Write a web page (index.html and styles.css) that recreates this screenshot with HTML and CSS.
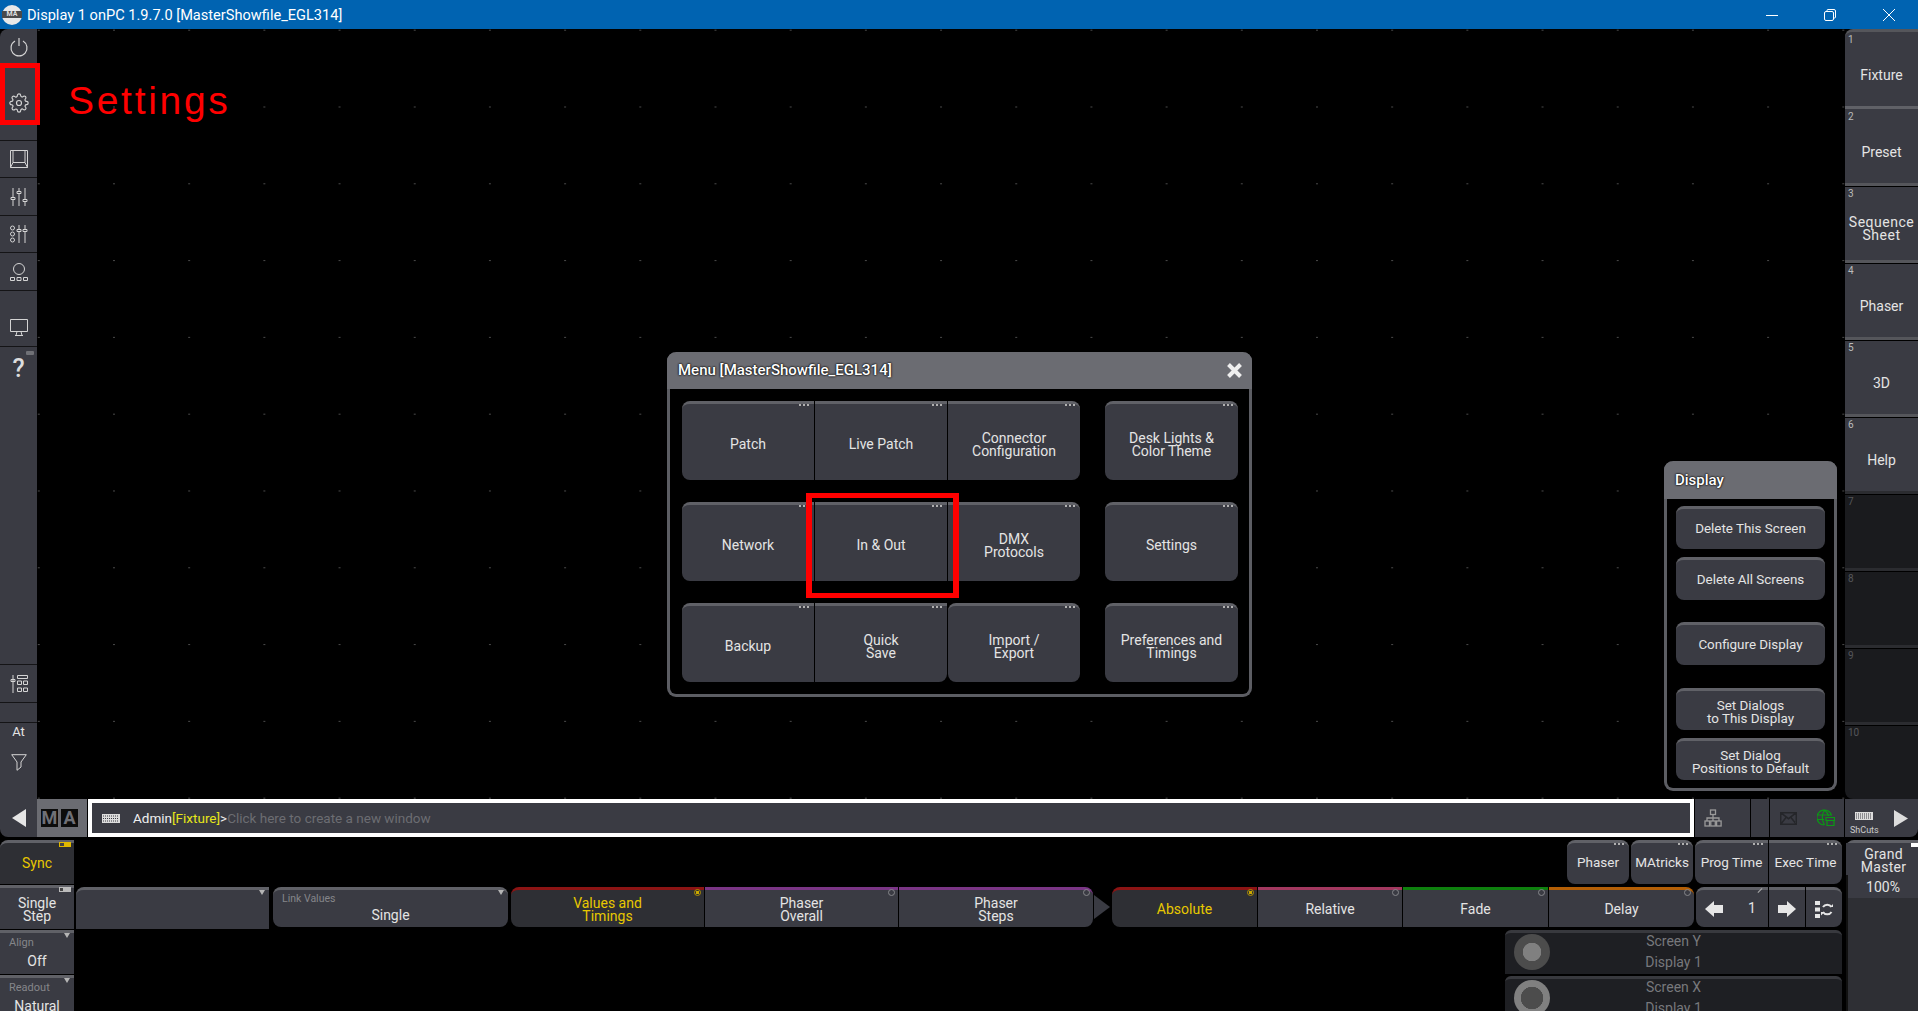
FILE: index.html
```html
<!DOCTYPE html>
<html lang="en">
<head>
<meta charset="utf-8">
<title>Display 1 onPC</title>
<link rel="stylesheet" href="styles.css">
</head>
<body>
<header class="titlebar">
  <div class="logo"><span>MA</span></div>
  <div class="title">Display 1 onPC 1.9.7.0 [MasterShowfile_EGL314]</div>
  <div class="winbtn"><svg width="14" height="14"><path d="M1 7.5h12" stroke="#fff"/></svg></div>
  <div class="winbtn"><svg width="14" height="14" fill="none" stroke="#fff"><rect x="1.5" y="3.5" width="9" height="9" rx="1.5"/><path d="M4 3V2.500q0-1 1-1h6q1.500 0 1.500 1.500v6q0 1-1 1H11"/></svg></div>
  <div class="winbtn"><svg width="14" height="14"><path d="M1 1l12 12M13 1L1 13" stroke="#fff"/></svg></div>
</header>

<div class="upper">
  <nav class="rail">
    <div class="rail-item r-power"><svg class="ico" width="20" height="20" viewBox="0 0 20 20"><path d="M6 4a8 8 0 1 0 8 0M10 1v8"/></svg></div>
    <div class="rail-item r-gear sep"><svg class="ico" width="20" height="20" viewBox="0 0 24 24"><circle cx="12" cy="12" r="3"/><path d="M19.400 15a1.650 1.650 0 0 0 .33 1.820l.06.06a2 2 0 0 1 0 2.830 2 2 0 0 1-2.830 0l-.06-.06a1.650 1.650 0 0 0-1.820-.33 1.650 1.650 0 0 0-1 1.510V21a2 2 0 0 1-2 2 2 2 0 0 1-2-2v-.09A1.650 1.650 0 0 0 9 19.400a1.650 1.650 0 0 0-1.820.33l-.06.06a2 2 0 0 1-2.830 0 2 2 0 0 1 0-2.830l.06-.06a1.650 1.650 0 0 0 .33-1.820 1.650 1.650 0 0 0-1.510-1H3a2 2 0 0 1-2-2 2 2 0 0 1 2-2h.09A1.650 1.650 0 0 0 4.600 9a1.650 1.650 0 0 0-.33-1.820l-.06-.06a2 2 0 0 1 0-2.830 2 2 0 0 1 2.830 0l.06.06a1.650 1.650 0 0 0 1.820.33H9a1.650 1.650 0 0 0 1-1.510V3a2 2 0 0 1 2-2 2 2 0 0 1 2 2v.09a1.650 1.650 0 0 0 1 1.510 1.650 1.650 0 0 0 1.820-.33l.06-.06a2 2 0 0 1 2.830 0 2 2 0 0 1 0 2.830l-.06.06a1.650 1.650 0 0 0-.33 1.820V9a1.650 1.650 0 0 0 1.510 1H21a2 2 0 0 1 2 2 2 2 0 0 1-2 2h-.09a1.650 1.650 0 0 0-1.510 1z"/></svg></div>
    <div class="rail-item r-std sep"><svg class="ico" width="18" height="18" viewBox="0 0 18 18"><path d="M.5.500h17v17H.5zM3 .5v12L.5 17.500M15 .5v12l2.500 5M3 12.500h12"/></svg></div>
    <div class="rail-item r-h38 sep"><svg class="ico" width="18" height="18" viewBox="0 0 18 18"><path d="M3 0v9M3 12v6M9 0v3M9 6v12M15 0v11M15 14v4M1 9.500h4v2H1zM7 3.500h4v2H7zM13 11.500h4v2h-4z"/></svg></div>
    <div class="rail-item r-std sep"><svg class="ico" width="18" height="18" viewBox="0 0 18 18"><circle cx="2.500" cy="3" r="2"/><circle cx="2.500" cy="9" r="2"/><circle cx="2.500" cy="15" r="2"/><path d="M9 0v4M9 6v12M15 0v4M15 6v12M7 4.500h4v2H7zM13 4.500h4v2h-4z"/></svg></div>
    <div class="rail-item r-h38 sep"><svg class="ico" width="18" height="18" viewBox="0 0 18 18"><circle cx="9" cy="6" r="5.500"/><path d="M.5 14.500h4v3h-4zM7 14.500h4v3H7zM13.500 14.500h4v3h-4z"/></svg></div>
    <div class="rail-item r-monitor sep"><svg class="ico" width="18" height="18" viewBox="0 0 18 18"><path d="M.5 1.500h17v12H.5zM6 17.500l1-4M12 17.500l-1-4M5 17.500h8"/></svg></div>
    <div class="rail-item r-help"><span>?</span><i class="help-led"></i></div>
    <div class="rail-item r-fill sep"></div>
    <div class="rail-item r-h38 sep"><svg class="ico" width="18" height="18" viewBox="0 0 18 18"><path d="M3 0v18M1 4.500h4v2H1zM7.500.500h10v3h-10zM7.500 6h4v3.500h-4zM13.500 6h4v3.500h-4zM7.500 13h4v3.500h-4zM13.500 13h4v3.500h-4z"/></svg></div>
    <div class="rail-item r-blank sep"></div>
    <div class="rail-item r-at">At</div>
    <div class="rail-item r-filter"><svg class="ico" width="16" height="17" viewBox="0 0 16 17"><path d="M.7.700h14.600L10 8v5l-4 3.300V8z"/></svg></div>
    <div class="rail-item r-arrow"><svg width="14" height="18"><path d="M14 0v18L0 9z" fill="#e6e6e6"/></svg></div>
  </nav>

  <div class="center">
    <div class="stage">
      <main class="canvas">
        <div class="note-text">Settings</div>
        <div class="note-box note-gear"></div>

        <section class="dialog menu-dialog">
          <div class="dialog-head">
            <span>Menu [MasterShowfile_EGL314]</span>
            <svg class="close" width="17" height="17" viewBox="0 0 17 17"><path d="M2.500 2.500l12 12M14.500 2.500l-12 12" stroke="#eee" stroke-width="4"/></svg>
          </div>
          <div class="menu-grid">
            <div class="btn dots round-l">Patch</div>
            <div class="btn dots">Live Patch</div>
            <div class="btn dots round-r">Connector<br>Configuration</div>
            <div class="btn dots round off">Desk Lights &amp;<br>Color Theme</div>
            <div class="btn dots round-l">Network</div>
            <div class="btn dots">In &amp; Out</div>
            <div class="btn dots round-r">DMX<br>Protocols</div>
            <div class="btn dots round off">Settings</div>
            <div class="btn dots round-l">Backup</div>
            <div class="btn dots round-br">Quick<br>Save</div>
            <div class="btn dots round">Import /<br>Export</div>
            <div class="btn dots round off">Preferences and<br>Timings</div>
          </div>
        </section>
        <div class="note-box note-inout"></div>

        <section class="dialog display-dialog">
          <div class="dialog-head"><span>Display</span></div>
          <div class="display-list">
            <div class="btn round dl-a">Delete This Screen</div>
            <div class="btn round dl-b">Delete All Screens</div>
            <div class="btn round dl-c">Configure Display</div>
            <div class="btn round dl-d">Set Dialogs<br>to This Display</div>
            <div class="btn round dl-e">Set Dialog<br>Positions to Default</div>
          </div>
        </section>
      </main>

      <aside class="views">
        <div class="view first"><small>1</small>Fixture</div>
        <div class="view bright"><small>2</small>Preset</div>
        <div class="view"><small>3</small><span class="wide">Sequence<br>Sheet</span></div>
        <div class="view"><small>4</small>Phaser</div>
        <div class="view"><small>5</small>3D</div>
        <div class="view"><small>6</small>Help</div>
        <div class="view empty"><small>7</small></div>
        <div class="view empty"><small>8</small></div>
        <div class="view empty"><small>9</small></div>
        <div class="view empty last"><small>10</small></div>
      </aside>
    </div>

    <div class="cmdrow">
      <div class="ma-logo"><b>M</b><b>A</b></div>
      <div class="cmdline">
        <svg class="kbd" width="18" height="9" viewBox="0 0 18 9"><rect width="18" height="9" fill="#ddd"/><path d="M1 2h16M1 4.500h16M1 7h16" stroke="#3a3b43" stroke-dasharray="1 1"/></svg>
        <span class="cmd-user">Admin</span><span class="cmd-fix">[Fixture]</span><span class="cmd-user">&gt;</span><span class="cmd-hint">Click here to create a new window</span>
      </div>
      <div class="cell c-net"><svg width="18" height="18" viewBox="0 0 18 18" fill="none" stroke="#9a9a9a" stroke-width="1.300"><rect x="6.500" y="1" width="5" height="4.500"/><rect x="1" y="12" width="4.500" height="5"/><rect x="6.800" y="12" width="4.500" height="5"/><rect x="12.600" y="12" width="4.500" height="5"/><path d="M9 5.500V12M3 12V9h12v3"/></svg></div>
      <div class="cell c-blank"></div>
      <div class="cell c-status">
        <svg width="17" height="13" viewBox="0 0 17 13" fill="none" stroke="#25262a" stroke-width="1.500"><path d="M.7.700h15.600v11.600H.7zM.7.700l7.800 6 7.800-6M.7 12.300l5.500-7M16.300 12.300l-5.500-7"/></svg>
        <svg width="18" height="18" viewBox="0 0 18 18" fill="none" stroke="#0a9a14" stroke-width="1.200"><path d="M14.500 6A7.500 7.500 0 1 0 7 16M1 6h14M.5 10.500H7M7.500 1Q3 8 7.500 16M7.500 1Q11 4 11.500 7"/><path d="M9 8.500h8.500v3H9zM10 11.500h7v5h-7z"/></svg>
      </div>
      <div class="cell c-short">
        <div class="short"><svg width="18" height="8" viewBox="0 0 18 8"><rect width="18" height="8" fill="#ddd"/><path d="M1 2h16M1 4h16M1 6h16" stroke="#3a3b43" stroke-dasharray="1 1"/></svg><span>ShCuts</span></div>
        <svg width="14" height="17"><path d="M0 0v17l14-8.500z" fill="#ddd"/></svg>
      </div>
    </div>
  </div>
</div>

<div class="lower">
  <div class="left-col">
    <div class="sbtn on"><i class="led led-on"></i>Sync</div>
    <div class="sbtn two"><i class="led"></i>Single<br>Step</div>
    <div class="sbtn lab"><i class="drop"></i><small>Align</small><span>Off</span></div>
    <div class="sbtn lab"><i class="drop"></i><small>Readout</small><span>Natural</span></div>
  </div>

  <div class="mid-col">
    <div class="row-top">
      <div class="tbtn dots round w62">Phaser</div>
      <div class="tbtn dots round w62">MAtricks</div>
      <div class="tbtn dots round-l w73">Prog Time</div>
      <div class="tbtn dots round-r w73">Exec Time</div>
    </div>
    <div class="row-tabs">
      <div class="tab plain w193"><i class="drop"></i></div>
      <div class="tab link round w235"><i class="drop"></i><small>Link Values</small><span>Single</span></div>
      <div class="tab two c-red on round-l w193"><i class="ring ring-on"></i>Values and<br>Timings</div>
      <div class="tab two c-purple w193"><i class="ring"></i>Phaser<br>Overall</div>
      <div class="tab two c-purple round-r w194"><i class="ring"></i>Phaser<br>Steps</div>
      <svg class="tab-arrow" width="16" height="24"><path d="M0 0l16 12L0 24z" fill="#3a3b43"/></svg>
      <div class="tab c-red on round-l w145"><i class="ring ring-on"></i>Absolute</div>
      <div class="tab c-rose w144"><i class="ring"></i>Relative</div>
      <div class="tab c-green w145"><i class="ring"></i>Fade</div>
      <div class="tab c-orange round-r w145"><i class="ring"></i>Delay</div>
      <div class="stepper">
        <div class="step s-num round-l">
          <svg width="18" height="16"><path d="M0 8l9-8v4h9v8H9v4z" fill="#e6e6e6"/></svg><span>1</span><i class="slash"></i>
        </div>
        <div class="step s-icon"><svg width="18" height="16"><path d="M18 8L9 0v4H0v8h9v4z" fill="#e6e6e6"/></svg></div>
        <div class="step s-icon round-r"><svg width="18" height="18" viewBox="0 0 18 18"><path d="M0 1h5v4H0zM0 7.500h5v4H0zM0 14h5v4H0z" fill="#e6e6e6"/><path d="M16.500 7A5 5 0 0 0 8 7M8 12a5 5 0 0 0 8.500 0" fill="none" stroke="#e6e6e6" stroke-width="2"/><path d="M15 7h3.500V3.500zM9.500 12H6v3.500z" fill="#e6e6e6"/></svg></div>
      </div>
    </div>
    <div class="encoders">
      <div class="enc"><div class="knob knob-y"></div><div class="enc-text">Screen Y<br>Display 1</div></div>
      <div class="enc"><div class="knob knob-x"></div><div class="enc-text">Screen X<br>Display 1</div></div>
    </div>
  </div>

  <div class="gm-col">
    <i class="gm-led"></i>
    <div class="gm-name">Grand<br>Master</div>
    <div class="gm-val">100%</div>
    <div class="gm-rest"></div>
  </div>
</div>
</body>
</html>
```

FILE: styles.css
```css
* {
  box-sizing: border-box;
}
html, body {
  margin: 0;
  height: 1011px;
  overflow: hidden;
  background: #000;
}
body {
  font-family: Roboto, "Liberation Sans", sans-serif;
  font-size: 14px;
  line-height: 13px;
  color: #e4e4e4;
}
i {
  display: block;
}

/* title bar */
.titlebar {
  height: 29px;
  display: flex;
  align-items: center;
  background: #0063b1;
  color: #fff;
}
.logo {
  width: 20px;
  height: 20px;
  margin-left: 2px;
  border-radius: 50%;
  background: #e8e8e8;
  display: flex;
  align-items: center;
  justify-content: center;
}
.logo span {
  width: 100%;
  background: #4a4a4a;
  color: #ddd;
  font-size: 7px;
  line-height: 7px;
  font-weight: 700;
  text-align: center;
}
.title {
  flex: 1;
  margin-left: 5px;
  font-size: 14.600px;
  line-height: 20px;
}
.winbtn {
  width: 58.500px;
  height: 29px;
  display: flex;
  align-items: center;
  justify-content: center;
}

/* left rail */
.upper {
  display: flex;
  height: 808px;
}
.rail {
  width: 37px;
  flex: none;
  display: flex;
  flex-direction: column;
  background: #3a3b43;
  border-radius: 8px 0 0 8px;
}
.rail-item {
  display: flex;
  align-items: center;
  justify-content: center;
  position: relative;
}
.sep {
  border-bottom: 1px solid #141416;
}
.ico {
  fill: none;
  stroke: #d4d4d4;
  stroke-width: 1;
}
.r-power { height: 36px; }
.r-power .ico { stroke-width: 1.200; }
.r-gear { height: 76px; padding-top: 1px; }
.r-gear .ico { stroke-width: 1.400; }
.r-std { height: 37px; }
.r-h38 { height: 38px; }
.r-monitor { height: 56px; padding-top: 17px; }
.r-help { height: 40px; font-size: 25px; font-weight: 500; color: #ddd; padding-top: 2px; }
.help-led {
  position: absolute;
  top: 4px;
  right: 3px;
  width: 8px;
  height: 4px;
  background: #707176;
  border-radius: 1px;
}
.r-fill { flex: 1; }
.r-blank { height: 20px; }
.r-at { height: 17px; font-size: 13px; }
.r-filter { height: 59px; padding-bottom: 15px; }
.r-arrow { height: 38px; }

/* main area */
.center {
  flex: 1;
  min-width: 0;
  display: flex;
  flex-direction: column;
}
.stage {
  height: 770px;
  display: flex;
}
.canvas {
  flex: 1;
  position: relative;
  background-color: #000;
  background-image: radial-gradient(circle, #4a4a4a 0.700px, transparent 1px);
  background-size: 75.200px 76.800px;
  background-position: 39.400px 39.600px;
}
.note-text {
  position: absolute;
  left: 31px;
  top: 49px;
  color: #f00;
  font-family: "Liberation Sans", sans-serif;
  font-size: 39px;
  line-height: 45px;
  letter-spacing: 2.700px;
}
.note-box {
  position: absolute;
  border: 5px solid #f00;
  z-index: 5;
}
.note-gear {
  left: -37px;
  top: 34px;
  width: 40px;
  height: 62px;
}
.note-inout {
  left: 769px;
  top: 464px;
  width: 153px;
  height: 105px;
  border-width: 5px 6px;
}

/* floating dialogs */
.dialog {
  position: absolute;
  background: #000;
  border: 3px solid #5c5d63;
  border-top: 0;
  border-radius: 9px;
}
.dialog-head {
  display: flex;
  align-items: center;
  justify-content: space-between;
  margin: 0 -3px;
  background: #6b6c72;
  border-radius: 9px 9px 0 0;
  color: #fff;
  font-size: 15px;
  font-weight: 500;
  text-shadow: 0 0 2px #000, 0 0 2px #000;
}
.menu-dialog {
  left: 630px;
  top: 323px;
  width: 585px;
  height: 345px;
}
.menu-dialog .dialog-head {
  height: 37px;
  padding: 0 9px 0 11px;
}
.menu-grid {
  display: grid;
  grid-template-columns: 132px 132px 132px 157px;
  grid-template-rows: 79px 79px 79px;
  gap: 22px 1px;
  padding: 12px 0 0 12px;
}
.btn {
  position: relative;
  display: flex;
  align-items: center;
  justify-content: center;
  text-align: center;
  background: #3a3b43;
  border-top: 3px solid #606167;
  padding-top: 5px;
}
.off {
  margin-left: 24px;
}
.round { border-radius: 8px; }
.round-l { border-radius: 8px 0 0 8px; }
.round-r { border-radius: 0 8px 8px 0; }
.round-br { border-radius: 0 0 8px 0; }
.dots::after {
  content: "";
  position: absolute;
  top: 0;
  right: 4px;
  width: 11px;
  height: 2px;
  background: repeating-linear-gradient(90deg, #b0b0b0 0 2px, transparent 2px 4px);
}
.display-dialog {
  left: 1627px;
  top: 432px;
  width: 173px;
  height: 330px;
}
.display-dialog .dialog-head {
  height: 38px;
  padding: 0 11px;
}
.display-list {
  display: flex;
  flex-direction: column;
  padding: 7px 9px 0;
}
.display-list .btn {
  font-size: 13.400px;
  padding: 0 0 1px;
}
.display-list .dl-d, .display-list .dl-e {
  padding: 3px 0 0;
}
.dl-a { height: 43px; }
.dl-b { height: 43px; margin-top: 8px; }
.dl-c { height: 43px; margin-top: 22px; }
.dl-d { height: 42px; margin-top: 23px; }
.dl-e { height: 42px; margin-top: 8px; }

/* right column of views */
.views {
  width: 73px;
  flex: none;
  display: flex;
  flex-direction: column;
}
.view {
  height: 77px;
  position: relative;
  display: flex;
  align-items: center;
  justify-content: center;
  text-align: center;
  background: #3a3b43;
  border-top: 3px solid #55565b;
  padding-top: 12px;
  box-shadow: inset 0 1px 0 #000;
}
.view small {
  position: absolute;
  top: 3px;
  left: 3px;
  font-size: 10px;
  line-height: 10px;
  color: #bbb;
}
.wide {
  letter-spacing: 0.500px;
}
.first {
  border-radius: 8px 0 0 0;
  box-shadow: none;
}
.bright { border-top-color: #606167; box-shadow: none; }
.empty {
  background: #1a1b1e;
  border-top-color: #2b2c30;
}
.empty small {
  color: #55565a;
}
.last {
  border-radius: 0 0 0 8px;
}

/* command line row */
.cmdrow {
  height: 38px;
  display: flex;
}
.ma-logo {
  width: 50px;
  flex: none;
  background: #6b6c72;
  display: flex;
  align-items: center;
  padding-left: 4px;
  gap: 3px;
}
.ma-logo b {
  background: #0c0c0c;
  color: #6f7076;
  font-size: 18px;
  line-height: 18px;
  width: 17px;
  height: 18px;
  text-align: center;
}
.cmdline {
  width: 1606px;
  margin-left: 1px;
  flex: none;
  display: flex;
  align-items: center;
  background: #3a3b43;
  border: 4px solid #fff;
  padding-left: 10px;
  font-size: 13.500px;
}
.kbd {
  margin-right: 13px;
}
.cmd-user { color: #f0f0f0; }
.cmd-fix { color: #e6e619; }
.cmd-hint { color: #6c6d72; }
.cell {
  display: flex;
  align-items: center;
  background: #3a3b43;
  margin-left: 1px;
  height: 38px;
}
.c-net { width: 55px; justify-content: center; padding-right: 20px; }
.c-blank { width: 18px; }
.c-status { width: 74px; justify-content: space-between; padding: 0 9px 0 10px; }
.c-short {
  width: 73px;
  margin-left: 1px;
  justify-content: space-between;
  padding: 0 10px 0 5px;
  border-radius: 0 0 8px 0;
}
.short {
  display: flex;
  flex-direction: column;
  align-items: center;
  gap: 5px;
  font-size: 9px;
  line-height: 10px;
  color: #ccc;
  padding-top: 11px;
}

/* lower panel */
.lower {
  height: 174px;
  display: flex;
  overflow: hidden;
}
.left-col {
  width: 74px;
  flex: none;
  padding-top: 3px;
  display: flex;
  flex-direction: column;
  gap: 1px;
}
.sbtn {
  position: relative;
  height: 44px;
  flex: none;
  display: flex;
  flex-direction: column;
  align-items: center;
  justify-content: center;
  text-align: center;
  background: #3a3b43;
  border-top: 3px solid #606167;
}
.sbtn:first-child {
  border-radius: 8px 0 0 0;
}
.sbtn.on {
  background: #2e2f34;
  color: #e8c800;
}
.sbtn.two {
  padding-top: 3px;
}
.lab {
  justify-content: flex-start;
}
.lab small {
  align-self: flex-start;
  margin: 4px 0 0 9px;
  font-size: 11px;
  line-height: 12px;
  color: #85868a;
}
.lab span {
  margin-top: 6px;
}
.led {
  position: absolute;
  top: -1px;
  right: 3px;
  width: 12px;
  height: 5px;
  background: linear-gradient(90deg, #444 0 33%, #bbb 33%);
  border: 1px solid #bbb;
}
.led-on {
  background: linear-gradient(90deg, #444 0 40%, #e0b800 40%);
  border-color: #e0b800;
}
.drop {
  position: absolute;
  top: 0;
  right: 4px;
  width: 0;
  height: 0;
  border-left: 3.500px solid transparent;
  border-right: 3.500px solid transparent;
  border-top: 5px solid #b5b5b5;
}
.mid-col {
  flex: 1;
  min-width: 0;
  padding: 0 4px 0 2px;
}
.row-top {
  display: flex;
  justify-content: flex-end;
  gap: 2px;
  height: 50px;
  padding-top: 3px;
}
.tbtn {
  position: relative;
  height: 44px;
  display: flex;
  align-items: center;
  justify-content: center;
  background: #3a3b43;
  border-top: 3px solid #606167;
  padding-bottom: 2px;
  font-size: 13.500px;
}
.tbtn.round-r {
  margin-left: -1px;
}
.w62 { width: 62px; }
.w73 { width: 73px; }
.w144 { width: 144px; }
.w145 { width: 145px; }
.w193 { width: 193px; }
.w194 { width: 194px; }
.w235 { width: 235px; }
.row-tabs {
  display: flex;
  height: 43px;
}
.tab {
  position: relative;
  height: 40px;
  margin-right: 1px;
  flex: none;
  display: flex;
  flex-direction: column;
  align-items: center;
  justify-content: center;
  text-align: center;
  background: #3a3b43;
  border-top: 3px solid #606167;
  padding-top: 1px;
}
.tab.two {
  padding-top: 3px;
}
.plain {
  height: 42px;
  margin-right: 4px;
  border-radius: 8px 0 0 0;
}
.link {
  margin-right: 3px;
  justify-content: flex-start;
  padding: 0;
}
.link small {
  align-self: flex-start;
  margin: 3px 0 0 9px;
  font-size: 10.500px;
  line-height: 12px;
  color: #85868a;
}
.link span {
  margin-top: 4px;
}
.c-red { border-top-color: #8c1414; }
.c-purple { border-top-color: #7a3585; }
.c-rose { border-top-color: #a2385f; }
.c-green { border-top-color: #0e800e; }
.c-orange { border-top-color: #b45f06; }
.tab.on {
  background: #2e2f34;
  color: #e8c800;
}
.ring {
  position: absolute;
  top: -1px;
  right: 3px;
  width: 7px;
  height: 7px;
  border: 1px solid #85868a;
  border-radius: 50%;
}
.ring-on {
  border-color: #b09000;
  background: radial-gradient(circle, #c8a800 0 1.500px, transparent 2px);
}
.tab-arrow {
  margin: 8px 2px 0 0;
  flex: none;
}
.stepper {
  display: flex;
  gap: 1px;
  margin-left: 1px;
  height: 40px;
}
.step {
  position: relative;
  height: 40px;
  display: flex;
  align-items: center;
  background: #3a3b43;
  border-top: 3px solid #606167;
}
.s-num {
  width: 72px;
  padding-left: 9px;
  gap: 25px;
}
.s-icon {
  width: 36px;
  justify-content: center;
}
.slash {
  position: absolute;
  top: 0;
  right: 5px;
  width: 6px;
  height: 1px;
  background: #aaa;
  transform: rotate(-45deg);
}
.encoders {
  display: flex;
  flex-direction: column;
  align-items: flex-end;
  gap: 2px;
}
.enc {
  width: 337px;
  height: 44px;
  flex: none;
  display: grid;
  grid-template-columns: 54px 1fr 54px;
  align-items: start;
  background: #1e1f23;
  border-top: 3px solid #38393e;
  border-radius: 6px 6px 0 0;
}
.knob {
  width: 36px;
  height: 36px;
  margin: 1px 0 0 9px;
  border-radius: 50%;
}
.knob-y {
  background: radial-gradient(circle, #808080 0 9px, #4c4c4c 9.500px);
}
.knob-x {
  background: radial-gradient(circle, #4c4c4c 0 11px, #808080 11.500px);
}
.enc-text {
  text-align: center;
  color: #77787c;
  line-height: 21px;
  margin-top: -2px;
}
.gm-col {
  width: 72px;
  flex: none;
  margin: 3px 0 0;
  position: relative;
  background: #2e2f34;
  border-top: 3px solid #606167;
  border-radius: 8px 0 0 0;
  display: flex;
  flex-direction: column;
}
.gm-led {
  position: absolute;
  top: 0;
  right: 0;
  width: 7px;
  height: 4px;
  background: #fff;
}
.gm-name {
  height: 32px;
  padding: 5px 0 0 3px;
  text-align: center;
  background: #3a3b43;
  line-height: 13px;
  letter-spacing: 0.300px;
}
.gm-val {
  height: 23px;
  background: #3a3b43;
  border-left: 2px solid #111;
  text-align: center;
  line-height: 25px;
}
.gm-rest {
  flex: 1;
  border-left: 2px solid #111;
}
```
